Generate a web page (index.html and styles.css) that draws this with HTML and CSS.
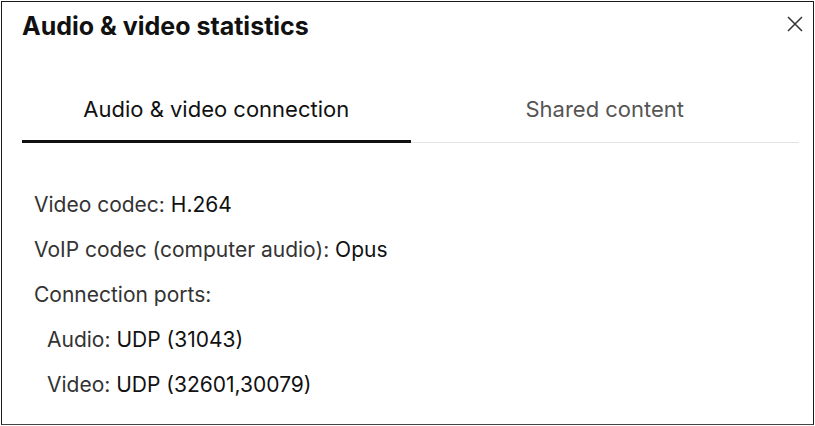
FILE: index.html
```html
<!DOCTYPE html>
<html lang="en">
<head>
    <meta charset="UTF-8">
    <meta name="viewport" content="width=device-width, initial-scale=1.0">
    <title>Audio &amp; video statistics</title>
    <link rel="stylesheet" href="styles.css">
</head>
<body>

<div class="stats-dialog">
    <div class="dialog-header">
        <h2>Audio &amp; video statistics</h2>
        <button class="close-btn" aria-label="Close">
            <svg width="16" height="16" viewBox="0 0 16 16">
                <path d="M1 1 L15 15 M15 1 L1 15" stroke="#333" stroke-width="1.5" fill="none"/>
            </svg>
        </button>
    </div>

    <div class="tabs">
        <div class="tab active">Audio &amp; video connection</div>
        <div class="tab">Shared content</div>
    </div>

    <ul class="stats-list">
        <li>Video codec: <span class="value">H.264</span></li>
        <li>VoIP codec (computer audio): <span class="value">Opus</span></li>
        <li>Connection ports:</li>
        <li class="sub">Audio: <span class="value">UDP (31043)</span></li>
        <li class="sub">Video: <span class="value">UDP (32601,30079)</span></li>
    </ul>
</div>

</body>
</html>
```

FILE: styles.css
```css
body {
    margin: 0;
    background: #fff;
    font-family: Inter, "Liberation Sans", sans-serif;
}
.stats-dialog {
    margin: 1px 0 0 1px;
    width: 811px;
    height: 422px;
    border: 1px solid #1a1a1a;
    border-bottom-color: #444;
    box-shadow: 0 1px 0 #bbb;
    background: #fff;
}
.dialog-header {
    display: flex;
    justify-content: space-between;
    align-items: flex-start;
    padding: 9px 10px 0 20px;
    height: 30px;
}
.dialog-header h2 {
    margin: 0;
    font-size: 25px;
    line-height: 30px;
    font-weight: 700;
    color: #111;
}
.close-btn {
    border: none;
    background: none;
    padding: 5px 0 0;
    cursor: pointer;
}
.tabs {
    display: flex;
    margin: 55px 14px 0 20px;
    border-bottom: 1px solid #e4e4e4;
}
.tab {
    flex: 1;
    text-align: center;
    font-size: 22px;
    line-height: 26px;
    color: #555;
    padding: 0 0 18px;
    margin-bottom: -1px;
    border-bottom: 3px solid transparent;
}
.tab.active {
    color: #111;
    border-bottom-color: #111;
}
.stats-list {
    list-style: none;
    margin: 0;
    padding: 39px 0 0 32px;
}
.stats-list li {
    font-size: 21px;
    color: #333;
    line-height: 45px;
}
.stats-list li.sub {
    padding-left: 13px;
}
.value {
    color: #111;
}
```
